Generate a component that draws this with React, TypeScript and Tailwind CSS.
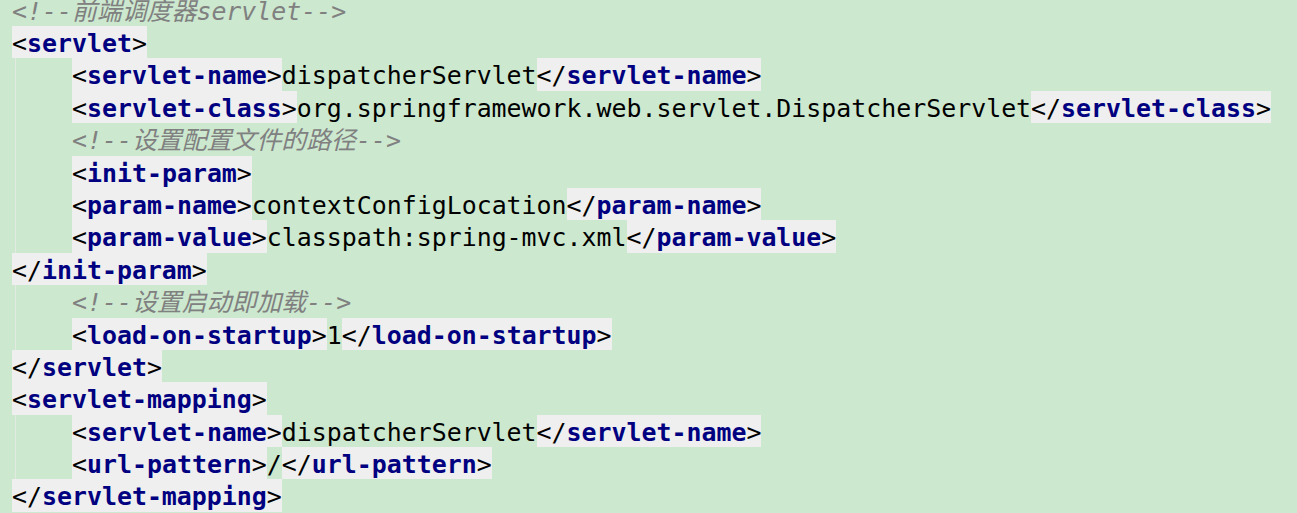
import React from "react";

type Seg =
  | { t: "open"; name: string }
  | { t: "close"; name: string }
  | { t: "text"; v: string }
  | { t: "comment"; v: string };

interface Line {
  indent: boolean;
  segs: Seg[];
}

// web.xml 片段：前端调度器配置
const lines: Line[] = [
  { indent: false, segs: [{ t: "comment", v: "<!--前端调度器servlet-->" }] },
  { indent: false, segs: [{ t: "open", name: "servlet" }] },
  {
    indent: true,
    segs: [
      { t: "open", name: "servlet-name" },
      { t: "text", v: "dispatcherServlet" },
      { t: "close", name: "servlet-name" },
    ],
  },
  {
    indent: true,
    segs: [
      { t: "open", name: "servlet-class" },
      { t: "text", v: "org.springframework.web.servlet.DispatcherServlet" },
      { t: "close", name: "servlet-class" },
    ],
  },
  { indent: true, segs: [{ t: "comment", v: "<!--设置配置文件的路径-->" }] },
  { indent: true, segs: [{ t: "open", name: "init-param" }] },
  {
    indent: true,
    segs: [
      { t: "open", name: "param-name" },
      { t: "text", v: "contextConfigLocation" },
      { t: "close", name: "param-name" },
    ],
  },
  {
    indent: true,
    segs: [
      { t: "open", name: "param-value" },
      { t: "text", v: "classpath:spring-mvc.xml" },
      { t: "close", name: "param-value" },
    ],
  },
  { indent: false, segs: [{ t: "close", name: "init-param" }] },
  { indent: true, segs: [{ t: "comment", v: "<!--设置启动即加载-->" }] },
  {
    indent: true,
    segs: [
      { t: "open", name: "load-on-startup" },
      { t: "text", v: "1" },
      { t: "close", name: "load-on-startup" },
    ],
  },
  { indent: false, segs: [{ t: "close", name: "servlet" }] },
  { indent: false, segs: [{ t: "open", name: "servlet-mapping" }] },
  {
    indent: true,
    segs: [
      { t: "open", name: "servlet-name" },
      { t: "text", v: "dispatcherServlet" },
      { t: "close", name: "servlet-name" },
    ],
  },
  {
    indent: true,
    segs: [
      { t: "open", name: "url-pattern" },
      { t: "text", v: "/" },
      { t: "close", name: "url-pattern" },
    ],
  },
  { indent: false, segs: [{ t: "close", name: "servlet-mapping" }] },
];

const Segment: React.FC<{ seg: Seg }> = ({ seg }) => {
  if (seg.t === "text") return <span className="text-black">{seg.v}</span>;
  if (seg.t === "comment")
    return <span className="italic text-[#808080]">{seg.v}</span>;
  return (
    <span className="bg-[#efefef] text-black">
      {seg.t === "open" ? "<" : "</"}
      <span className="font-bold text-[#000080]">{seg.name}</span>
      {">"}
    </span>
  );
};

export default function App() {
  return (
    <div className="h-[513px] w-full overflow-hidden bg-[#cce8cf]">
      <div
        className="-mt-[6.4px] pl-[12px] text-[24.9px]"
        style={{ fontFamily: '"DejaVu Sans Mono", "Noto Sans CJK SC", monospace' }}
      >
        {lines.map((line, i) => (
          <div key={i} className="flex h-[32.4px] leading-[36.4px] whitespace-pre">
            {line.indent && (
              <span className="ml-[3px] w-[57px] shrink-0 border-l border-[#e2eae2]" />
            )}
            {line.segs.map((seg, j) => (
              <Segment key={j} seg={seg} />
            ))}
          </div>
        ))}
      </div>
    </div>
  );
}
